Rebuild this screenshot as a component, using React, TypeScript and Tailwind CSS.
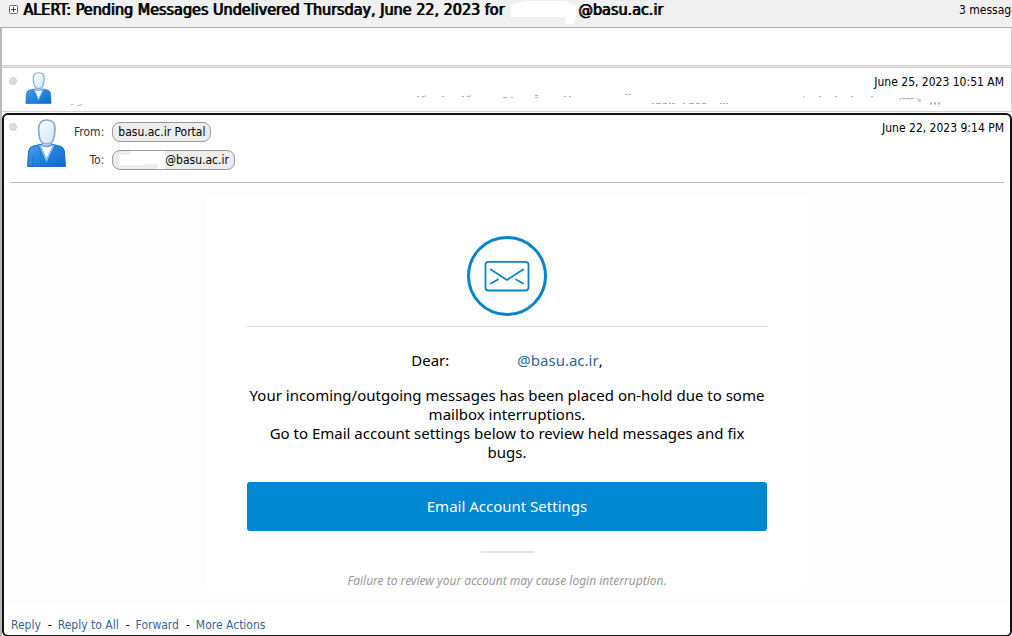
function Avatar({ className, id }: { className: string; id: string }) {
  return (
    <svg viewBox="0 0 39 48" className={className} aria-hidden="true">
      <defs>
        <linearGradient id={`${id}-head`} x1="0" y1="0" x2="1" y2="1">
          <stop offset="0" stopColor="#f6fbff" />
          <stop offset="0.5" stopColor="#e6f1fb" />
          <stop offset="1" stopColor="#c9dff5" />
        </linearGradient>
        <linearGradient id={`${id}-body`} x1="0" y1="0" x2="1" y2="1">
          <stop offset="0" stopColor="#4a9dea" />
          <stop offset="0.5" stopColor="#2482e0" />
          <stop offset="1" stopColor="#0f68cf" />
        </linearGradient>
      </defs>
      <path
        d="M13 25.5 L5 27.5 Q2 28.5 1.5 33 L0.6 47.4 H38.4 L37.5 33 Q37 28.500 34 27.5 L26 25.5 L19.5 27.5 Z"
        fill={`url(#${id}-body)`}
        stroke="#1565c5"
      />
      <path d="M5.5 37 V47 M33.5 37 V47" stroke="#1b6fce" strokeWidth="0.8" />
      <path d="M13.5 26 L19.5 40 L26 26 Z" fill="#fff" />
      <path d="M12.5 26 L19.5 42 L27 26" fill="none" stroke="#7db9f2" strokeWidth="1.6" />
      <path d="M11 26.5 L19.5 45 L28.5 26.5" fill="none" stroke="#1868cc" strokeWidth="0.7" />
      <path d="M14 24 Q19.5 29 25.5 24 V26.5 Q20 30 14 26.5 Z" fill="#5f9ee0" />
      <path
        d="M20 1 C25.500 1 28.2 4 28 10 C27.8 15 27.5 18 26 21.5 C24.500 24.500 22.500 25 20 25 C17 25 15 24.500 13.500 21.5 C12 18 11.800 15 11.600 10 C11.500 4 14.500 1 20 1 Z"
        fill={`url(#${id}-head)`}
        stroke="#7fa9d6"
        strokeWidth="1.6"
      />
    </svg>
  );
}

function StatusDot() {
  return <span className="size-2 shrink-0 rounded-full border border-[#d0d0d0] bg-[#dcdcdc]" />;
}

function SnippetMarks() {
  return (
    <svg viewBox="0 0 880 14" className="h-3.5 w-[880px]" aria-hidden="true">
      <g fill="none" stroke="#b0b0b0" strokeWidth="1">
        <path d="M9 10.500h2M16 11.500q2 .5 4-1.500" />
        <path d="M355 2.500h2m3 0h2l2-1m16 1h2m18 0h2m3 0h2l2-1m32 2h4m4 0h2m22-2h3m-3 2h3m26-1h2m3 0h2m54-2h2m1 0h3" />
        <path d="M590 9.500h2m2 0h5m2 0h4m2 0h2m1 0h3m8 0h2m4 0h5m2 0h4m2 0h4m14 0h2m1 0h2m1 0h2" />
        <path d="M741 2.500h1m15 0h2m14 0h2m14 0h2m18 0h2" />
        <path d="M837 4.500l2 1m1-1h3m1 1v-1h3l1 1v-1h4m3 0 4 2-3 1" />
        <path d="M868 9.500h2m2 0h2m2 0h2" strokeWidth="2" />
      </g>
    </svg>
  );
}

function EnvelopeBadge() {
  return (
    <svg viewBox="0 0 80 80" className="size-20" fill="none" stroke="#0784cb" aria-hidden="true">
      <circle cx="40" cy="40" r="38.5" strokeWidth="3" />
      <rect x="18.5" y="25.8" width="43" height="28.7" rx="3" strokeWidth="1.8" />
      <path
        d="M23.8 33.5 L40 44 L56.2 33.5 M23.8 47.5 L31 43.5 M49 43.5 L56.2 47.5"
        strokeWidth="1.7"
        strokeLinecap="round"
        strokeLinejoin="round"
      />
    </svg>
  );
}

const pill = "flex h-5 items-center rounded-lg border border-[#999] bg-[#ededed] px-[5px]";
const actions = ["Reply", "Reply to All", "Forward", "More Actions"];

export default function App() {
  return (
    <div className="flex min-h-screen flex-col overflow-hidden bg-white font-['DejaVu_Sans_Condensed','DejaVu_Sans',sans-serif] text-xs leading-4 text-black">
      <header className="flex h-7 items-start justify-between border-b border-[#aaa] bg-[#f0f0f0] pl-[9px]">
        <div className="flex items-start">
          <button type="button" aria-label="Expand conversation" className="mt-[5px] mr-1">
            <svg viewBox="0 0 10 10" className="size-2.5" fill="none" aria-hidden="true">
              <rect x="0.5" y="0.5" width="8" height="8" rx="1" stroke="#666" fill="#fff" />
              <path d="M2 4.500h5M4.500 2v5" stroke="#444" />
            </svg>
          </button>
          <h1 className="flex text-base leading-5 font-normal whitespace-nowrap [text-shadow:1px_0_0_#000]">
            ALERT: Pending Messages Undelivered Thursday, June 22, 2023 for
            <svg viewBox="0 0 66 24" className="mr-0.5 ml-1.5 h-6 w-[66px]" aria-hidden="true">
              <path d="M1 5 L14 1 H56 L63 5 H66 V17 L64 24 H55 V17 H1 Z" fill="#fff" />
            </svg>
            @basu.ac.ir
          </h1>
        </div>
        <span className="w-[53px] pt-0.5 whitespace-nowrap">3 messages</span>
      </header>

      <main className="flex flex-1 flex-col border-l-2 border-[#b8b8b8]">
        <div className="h-[37px] border-r border-[#d0d0d0]" />
        <div className="h-[3px] border-y border-[#cfcfcf] bg-[#e6e6e6]" />
        <section className="flex h-11 items-start border-r border-b border-[#d0d0d0] pl-[7px]">
          <div className="flex pt-[9px]">
            <StatusDot />
          </div>
          <Avatar id="small" className="mt-1 ml-2 h-8 w-[27px] shrink-0" />
          <div className="flex min-w-0 flex-1 flex-col pt-1.5 pr-[7px] pl-1.5">
            <time className="self-end">June 25, 2023 10:51 AM</time>
            <div className="mt-1 ml-1 overflow-hidden">
              <SnippetMarks />
            </div>
          </div>
        </section>

        <article className="mt-px flex flex-1 flex-col rounded-md border-2 border-[#111]">
          <div className="mx-1.5 flex h-[68px] items-start border-b border-[#bbb] pt-1">
            <div className="-ml-px flex pt-1">
              <StatusDot />
            </div>
            <Avatar id="large" className="ml-2.5 h-12 w-[39px] shrink-0" />
            <dl className="mt-[3px] ml-2 grid grid-cols-[auto_auto] items-center gap-x-2 gap-y-2">
              <dt className="text-right text-[#333]">From:</dt>
              <dd className="flex">
                <span className={pill}>basu.ac.ir Portal</span>
              </dd>
              <dt className="text-right text-[#333]">To:</dt>
              <dd className="flex">
                <span className={pill}>
                  <svg viewBox="0 0 47 18" className="h-[18px] w-[47px]" aria-hidden="true">
                    <path d="M0 4 H12 V0 H47 V18 H40 V13 H26 V14 H0 Z" fill="#fff" />
                  </svg>
                  @basu.ac.ir
                </span>
              </dd>
            </dl>
            <time className="ml-auto pt-px">June 22, 2023 9:14 PM</time>
          </div>

          <div className="mt-[3px] flex justify-center bg-[#fdfdfd] pt-2.5 pb-[13px] font-['Noto_Sans',sans-serif]">
            <div className="flex w-full max-w-[600px] flex-col items-center rounded bg-white px-10 pt-10 text-center text-[15px] leading-[19px]">
              <EnvelopeBadge />
              <hr className="mt-2.5 w-full border-[#d8dde9]" />
              <p className="mt-6 flex w-full justify-center">
                <span>Dear:</span>
                <span className="w-[68px]" />
                <a href="#" className="text-[#36649b]">@basu.ac.ir</a>,
              </p>
              <p className="mt-4 w-full">
                Your incoming/outgoing messages has been placed on-hold due to some mailbox interruptions.
              </p>
              <p className="w-full px-4">
                Go to Email account settings below to review held messages and fix bugs.
              </p>
              <button type="button" className="mt-5 h-[49px] w-full rounded-[3px] bg-[#0087d2] text-white">
                Email Account Settings
              </button>
              <hr className="mt-5 w-[53px] border-t-2 border-[#e3e3e3]" />
              <p className="mt-5 pb-px text-xs leading-4 text-[#999] italic">
                Failure to review your account may cause login interruption.
              </p>
            </div>
          </div>

          <nav className="flex gap-[7px] px-[7px] pt-3.5 pb-0.5">
            {actions.map((label, i) => (
              <span key={label} className="flex gap-1.5">
                {i > 0 && <span>-</span>}
                <a href="#" className="text-[#36649b]">{label}</a>
              </span>
            ))}
          </nav>
        </article>
      </main>
    </div>
  );
}
